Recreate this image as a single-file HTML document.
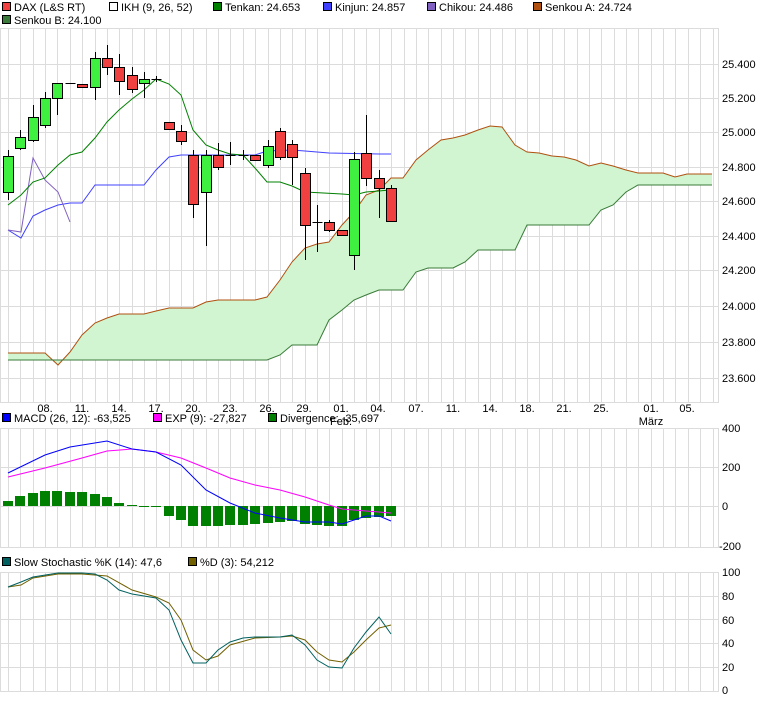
<!DOCTYPE html>
<html><head><meta charset="utf-8"><style>
html,body{margin:0;padding:0;background:#fff;width:760px;height:701px;overflow:hidden}
svg{display:block;font-family:"Liberation Sans",Arial,sans-serif;font-size:11px}
</style></head><body>
<svg width="760" height="701" viewBox="0 0 760 701" xmlns="http://www.w3.org/2000/svg">
<g id="grid" stroke="#dcdcdc" stroke-width="1" shape-rendering="crispEdges"></g>
<!-- legends -->
<g font-size="11" fill="#000">
<rect x="2.5" y="2.5" width="8" height="8" fill="#f04040" stroke="#000"/><text x="14" y="11">DAX (L&amp;S RT)</text>
<rect x="109.5" y="2.5" width="8" height="8" fill="#fff" stroke="#000"/><text x="121" y="11">IKH (9, 26, 52)</text>
<rect x="213.5" y="2.5" width="8" height="8" fill="#008000" stroke="#000"/><text x="225" y="11">Tenkan: 24.653</text>
<rect x="323.5" y="2.5" width="8" height="8" fill="#4040ff" stroke="#000"/><text x="335" y="11">Kinjun: 24.857</text>
<rect x="427.5" y="2.5" width="8" height="8" fill="#8060c0" stroke="#000"/><text x="439" y="11">Chikou: 24.486</text>
<rect x="533.5" y="2.5" width="8" height="8" fill="#b05010" stroke="#000"/><text x="545" y="11">Senkou A: 24.724</text>
<rect x="2.5" y="15.5" width="8" height="8" fill="#3a7a3a" stroke="#000"/><text x="14" y="24">Senkou B: 24.100</text>
<rect x="2.5" y="413.5" width="8" height="8" fill="#0000ff" stroke="#000"/><text x="14" y="422">MACD (26, 12): -63,525</text>
<rect x="153.5" y="413.5" width="8" height="8" fill="#ff00ff" stroke="#000"/><text x="165" y="422">EXP (9): -27,827</text>
<rect x="268.5" y="413.5" width="8" height="8" fill="#008000" stroke="#000"/><text x="280" y="422">Divergence: -35,697</text>
<rect x="2.5" y="557.5" width="8" height="8" fill="#006060" stroke="#000"/><text x="14" y="566">Slow Stochastic %K (14): 47,6</text>
<rect x="188.5" y="557.5" width="8" height="8" fill="#706000" stroke="#000"/><text x="200" y="566">%D (3): 54,212</text>
</g>
<!-- axis labels -->
<g font-size="11" fill="#000">
<text x="722" y="68">25.400</text><text x="722" y="102">25.200</text><text x="722" y="136">25.000</text>
<text x="722" y="171">24.800</text><text x="722" y="205">24.600</text><text x="722" y="240">24.400</text>
<text x="722" y="274">24.200</text><text x="722" y="310">24.000</text><text x="722" y="346">23.800</text><text x="722" y="382">23.600</text>
<text x="722" y="432">400</text><text x="722" y="471">200</text><text x="722" y="510">0</text><text x="719" y="550">-200</text>
<text x="722" y="576">100</text><text x="722" y="600">80</text><text x="722" y="624">60</text><text x="722" y="647">40</text><text x="722" y="671">20</text><text x="722" y="694">0</text>
</g>
<g font-size="11" fill="#000" text-anchor="middle">
<text x="45" y="412">08.</text><text x="82" y="412">11.</text><text x="119" y="412">14.</text><text x="156" y="412">17.</text>
<text x="193" y="412">20.</text><text x="230" y="412">23.</text><text x="267" y="412">26.</text><text x="304" y="412">29.</text>
<text x="341" y="412">01.</text><text x="378" y="412">04.</text><text x="416" y="412">07.</text><text x="453" y="412">11.</text>
<text x="490" y="412">14.</text><text x="527" y="412">18.</text><text x="564" y="412">21.</text><text x="601" y="412">25.</text>
<text x="651" y="412">01.</text><text x="687" y="412">05.</text>
<text x="341" y="425">Feb.</text><text x="651" y="425">März</text>
</g>
<!-- cloud -->
<polygon fill="#d0f5d0" points="8,353 45,353 58,365 70,352 82,335 95,323 107,318 119,314 144,314 156,311 169,308 193,308 206,302 218,300 255,300 267,297 280,280 292,262 305,248 317,244 329,242 342,225 354,212 366,195 379,190 391,178 403,178 416,160 428,150 441,140 453,138 465,135 478,130 490,126 502,127 515,145 527,152 539,153 552,156 564,157 576,160 589,166 601,163 613,166 626,170 638,173 663,173 675,177 687,174 712,174 712,185 638,185 626,192 613,205 601,210 589,225 527,225 515,250 478,250 465,262 453,268 428,268 416,272 403,290 379,290 366,295 354,300 342,310 329,320 317,345 292,345 280,355 267,360 8,360"/>
<polyline fill="none" stroke="#b05010" stroke-width="1" points="8,353 45,353 58,365 70,352 82,335 95,323 107,318 119,314 144,314 156,311 169,308 193,308 206,302 218,300 255,300 267,297 280,280 292,262 305,248 317,244 329,242 342,225 354,212 366,195 379,190 391,178 403,178 416,160 428,150 441,140 453,138 465,135 478,130 490,126 502,127 515,145 527,152 539,153 552,156 564,157 576,160 589,166 601,163 613,166 626,170 638,173 663,173 675,177 687,174 712,174"/>
<polyline fill="none" stroke="#3a7a3a" stroke-width="1" points="8,360 267,360 280,355 292,345 317,345 329,320 342,310 354,300 366,295 379,290 403,290 416,272 428,268 453,268 465,262 478,250 515,250 527,225 589,225 601,210 613,205 626,192 638,185 712,185"/>
<polyline fill="none" stroke="#4040ff" stroke-width="1" points="8,230 21,238 33,216 45,210 58,205 70,203 82,203 95,185 144,185 156,170 169,157 181,155 255,155 267,151 292,150 305,151 317,152 329,153 379,154 391,154"/>
<polyline fill="none" stroke="#8060c0" stroke-width="1" points="8,230 21,232 33,158 45,180 58,192 70,222"/>
<polyline fill="none" stroke="#008000" stroke-width="1" points="8,205 21,195 33,182 45,178 58,165 70,155 82,152 95,138 107,122 119,110 132,99 144,90 156,79 169,84 181,95 193,130 206,145 218,150 230,154 243,155 255,168 267,182 280,182 292,186 305,192 342,194 354,195 366,192 391,190"/>
<g id="candles" stroke="#000" stroke-width="1"></g>
<g id="macd"></g>
<polyline fill="none" stroke="#ff00ff" stroke-width="1" points="8,477 45,468 82,458 107,451 132,449 156,452 181,458 206,468 230,478 255,485 280,490 305,497 329,505 342,509 366,511 391,513"/>
<polyline fill="none" stroke="#0000ff" stroke-width="1" points="8,473 45,455 70,447 107,441 132,449 156,452 181,465 206,490 230,503 255,513 280,518 305,522 329,522 342,524 354,520 366,516 379,516 391,521"/>
<polyline fill="none" stroke="#706000" stroke-width="1" points="8,587 21,585 33,578 58,574 82,574 107,576 132,590 156,597 169,603 181,620 193,650 206,660 218,656 230,645 255,638 280,637 292,636 305,640 317,652 329,660 342,662 354,652 366,640 379,628 391,625"/>
<polyline fill="none" stroke="#006060" stroke-width="1" points="8,587 21,582 33,577 58,573 82,573 95,574 107,580 119,590 132,594 156,598 169,610 181,640 193,663 206,663 218,650 230,642 243,638 255,637 280,637 292,635 305,645 317,660 329,667 342,668 354,648 366,632 379,617 391,634"/>
</svg>
<script>
(function(){
var NS="http://www.w3.org/2000/svg";
function el(p,t,a){var e=document.createElementNS(NS,t);for(var k in a)e.setAttribute(k,a[k]);p.appendChild(e);return e;}
var g=document.getElementById('grid');
var panels=[[28,402],[428,547],[572,691]];
for(var k=0;k<=57;k++){var x=Math.round(8+12.36*k)+0.5;if(x>718)break;panels.forEach(function(p){el(g,'line',{x1:x,y1:p[0],x2:x,y2:p[1]});});}
[64,98,132,167,201,236,270,306,342,378].forEach(function(y){el(g,'line',{x1:0,y1:y+.5,x2:718,y2:y+.5});});
[467,506].forEach(function(y){el(g,'line',{x1:0,y1:y+.5,x2:718,y2:y+.5});});
[596,619,643,667].forEach(function(y){el(g,'line',{x1:0,y1:y+.5,x2:718,y2:y+.5});});
panels.forEach(function(p){el(g,'rect',{x:0.5,y:p[0]+.5,width:718,height:p[1]-p[0],fill:'none'});});
var c=[[156,192,150,200,'g'],[137,148,130,150,'g'],[117,140,105,142,'g'],[98,125,92,128,'g'],[83,98,83,115,'g'],[83,83,83,83,'d'],[84,87,84,87,'r'],[58,87,52,100,'g'],[58,67,45,75,'r'],[67,81,54,95,'r'],[75,89,67,93,'r'],[79,83,72,98,'g'],[79,79,76,82,'d'],[122,129,122,129,'r'],[131,141,125,145,'r'],[155,204,150,218,'r'],[155,192,150,246,'g'],[155,167,143,170,'r'],[155,155,142,165,'d'],[155,155,150,160,'d'],[155,160,155,160,'r'],[146,165,140,168,'g'],[131,157,128,160,'r'],[144,157,140,185,'r'],[173,225,168,260,'r'],[222,222,205,252,'d'],[222,230,220,232,'r'],[230,235,230,235,'r'],[159,255,152,270,'g'],[153,178,115,186,'r'],[178,188,170,218,'r'],[188,221,185,222,'r']];
var cg=document.getElementById('candles');
c.forEach(function(d,i){var x=Math.round(8+12.36*i)+0.5;
el(cg,'line',{x1:x,y1:d[2],x2:x,y2:d[3]});
if(d[4]=='d'){el(cg,'line',{x1:x-5,y1:d[0]+.5,x2:x+5,y2:d[0]+.5});}
else el(cg,'rect',{x:x-5,y:d[0]+.5,width:10,height:Math.max(d[1]-d[0],2),fill:d[4]=='g'?'#40f040':'#f04040'});});
var m=[501,496,493,491,491,492,492,494,497,503,505,506,507,516,520,526,526,526,525,525,524,523,522,521,524,525,526,526,520,518,517,516];
var mg=document.getElementById('macd');
m.forEach(function(y,i){var x=Math.round(8+12.36*i)-5;var t=Math.min(y,506),h=Math.max(Math.abs(y-506),1);el(mg,'rect',{x:x,y:t,width:10,height:h,fill:'#008000'});});
})();
</script>
</body></html>
